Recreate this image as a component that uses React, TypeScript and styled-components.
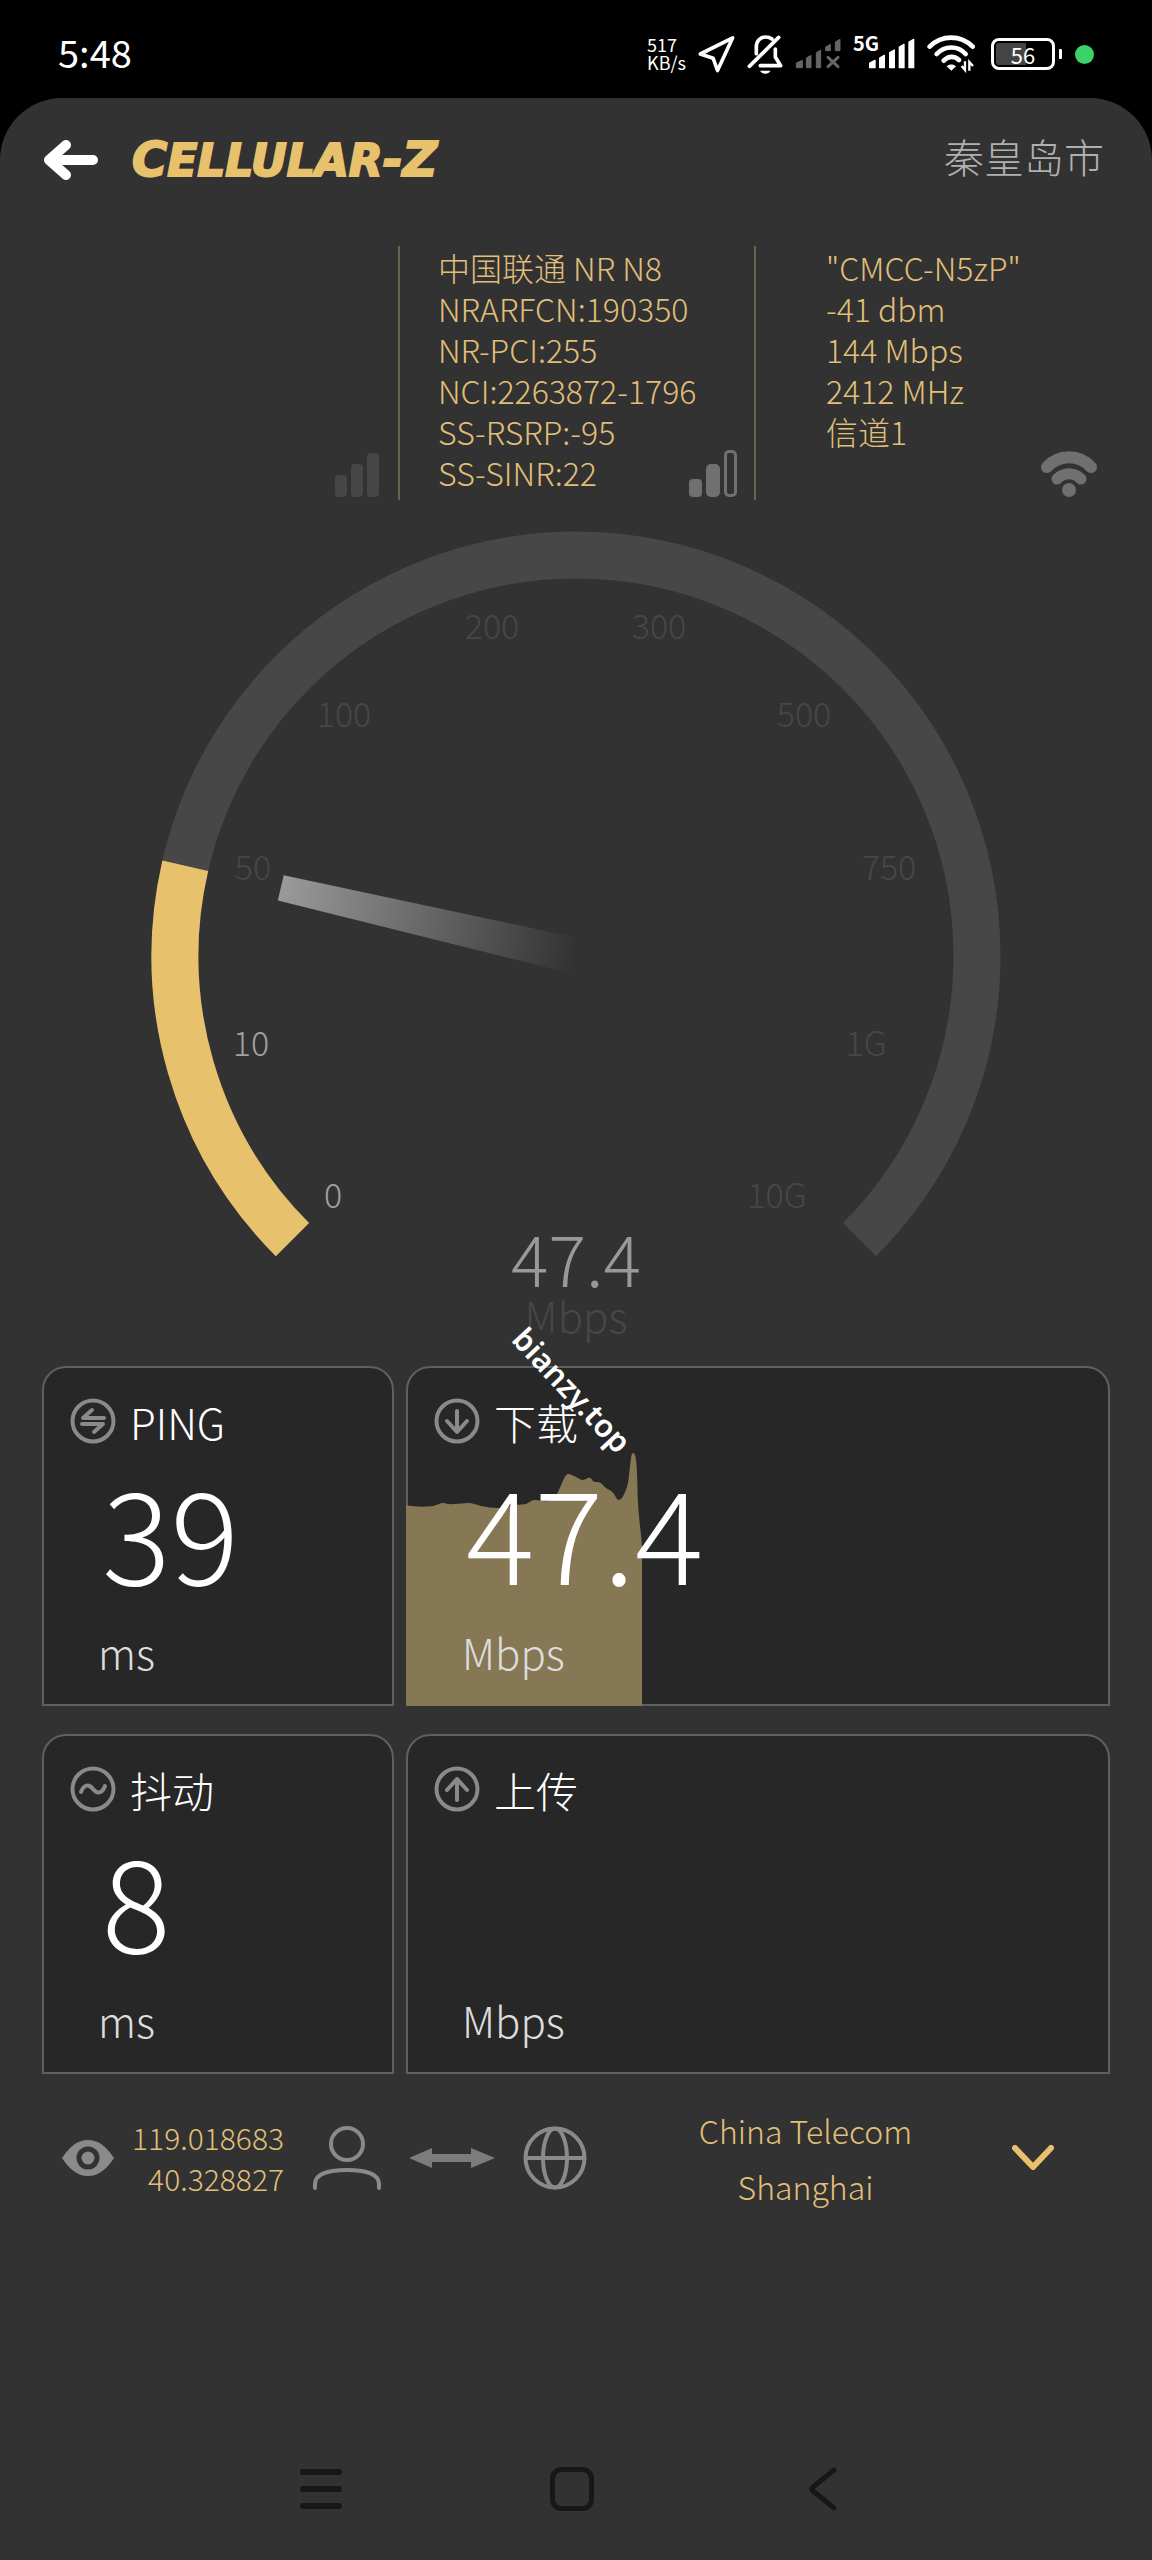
import React from 'react';
import styled, { createGlobalStyle } from 'styled-components';

const gold = '#e8c16c';
const goldText = '#e0bf78';
const grey = '#8a8a8a';

const GlobalStyle = createGlobalStyle`
  * { box-sizing: border-box; }
  body {
    margin: 0;
    background: #000;
    font-family: 'Noto Sans CJK SC', 'Noto Sans', sans-serif;
    font-weight: 300;
  }
  svg { display: block; flex: none; }
`;

const Screen = styled.div`
  display: flex;
  flex-direction: column;
  min-height: 100vh;
  background: #000;
`;

const StatusBar = styled.div`
  display: flex;
  align-items: center;
  height: 98px;
  padding: 10px 58px 0;
  color: #fff;
`;

const Clock = styled.time`
  flex: 1;
  padding-bottom: 4px;
  font-size: 38px;
  line-height: 40px;
  font-weight: 400;
`;

const StatusIcons = styled.div`
  display: flex;
  align-items: center;
  gap: 12px;
`;

const NetSpeed = styled.div`
  padding-bottom: 2px;
  font-size: 18px;
  line-height: 18px;
  font-weight: 400;
`;

const MobileSignal = styled.div`
  display: grid;
  width: 62px;
  > * { grid-area: 1 / 1; }
  > svg { justify-self: end; }
`;

const NetType = styled.span`
  font-size: 20px;
  line-height: 16px;
  font-weight: 700;
`;

const Battery = styled.div`
  position: relative;
  width: 64px;
  height: 32px;
  margin-left: 4px;
  border: 3px solid #fff;
  border-radius: 8px;
  padding: 2px;
  font-size: 22px;
  line-height: 22px;
  font-weight: 400;
  text-align: center;
  background: linear-gradient(90deg, #444 56%, #000 56%) content-box;
  &::after {
    content: '';
    position: absolute;
    right: -10px;
    top: 8px;
    width: 3px;
    height: 10px;
    border-radius: 1px;
    background: #fff;
  }
`;

const PrivacyDot = styled.span`
  width: 19px;
  height: 19px;
  margin-left: 8px;
  border-radius: 50%;
  background: #3bd267;
`;

const Panel = styled.main`
  display: flex;
  flex: 1;
  flex-direction: column;
  padding: 0 42px;
  border-radius: 62px 62px 0 0;
  background: #323232;
`;

const Header = styled.header`
  display: flex;
  align-items: center;
  height: 124px;
`;

const PlainButton = styled.button`
  display: flex;
  align-items: center;
  justify-content: center;
  padding: 0;
  border: 0;
  background: none;
  color: inherit;
  font: inherit;
  cursor: pointer;
`;

const Brand = styled.h1`
  flex: 1;
  margin: 0 0 0 32px;
  font-family: 'DejaVu Sans', sans-serif;
  font-size: 48px;
  line-height: 48px;
  font-weight: 700;
  font-style: italic;
  color: ${gold};
  -webkit-text-stroke: 2px ${gold};
`;

const SmallCaps = styled.span`
  font-size: 44px;
`;

const City = styled.span`
  padding: 0 6px 8px 0;
  font-size: 40px;
  line-height: 48px;
  color: #b0b0b0;
`;

const Networks = styled.section`
  display: grid;
  grid-template-columns: repeat(3, 1fr);
  height: 254px;
  margin-top: 24px;
`;

const Network = styled.div<{ $indent?: number; $end: number }>`
  display: grid;
  padding: 0 ${p => p.$end}px 3px ${p => p.$indent ?? 0}px;
  border-left: 2px solid transparent;
  > * { grid-area: 1 / 1; }
  > svg { place-self: end; }
  & + & { border-left-color: #6a6350; }
`;

const NetworkLines = styled.div`
  padding-top: 1px;
  font-size: 32px;
  line-height: 41px;
  white-space: nowrap;
  color: ${goldText};
`;

const Gauge = styled.svg`
  width: 100%;
  height: auto;
`;

const GaugeLabel = styled.text<{ $lit?: boolean }>`
  font-size: 34px;
  text-anchor: middle;
  fill: ${p => (p.$lit ? '#a0a0a0' : '#474747')};
`;

const GaugeValue = styled.text`
  font-size: 70px;
  text-anchor: middle;
  fill: #999;
`;

const GaugeUnit = styled.text`
  font-size: 42px;
  text-anchor: middle;
  fill: #474747;
`;

const Results = styled.section`
  position: relative;
  display: grid;
  grid-template-columns: 1fr 2fr;
  gap: 28px 12px;
`;

const Watermark = styled.span`
  position: absolute;
  left: 530px;
  top: 24px;
  z-index: 2;
  font-family: 'Noto Sans', sans-serif;
  font-size: 31px;
  line-height: 1;
  font-weight: 600;
  color: #fff;
  transform: translate(-50%, -50%) rotate(47deg);
`;

const Card = styled.article`
  position: relative;
  padding: 30px 26px 28px;
  border: 2px solid #606060;
  border-radius: 24px 24px 0 0;
  background: #272727;
`;

const CardBody = styled.div`
  position: relative;
`;

const CardTitle = styled.h2`
  display: flex;
  align-items: center;
  gap: 14px;
  height: 46px;
  margin: 0;
  font-size: 42px;
  font-weight: 300;
  color: #fff;
`;

const Value = styled.div`
  height: 128px;
  margin-top: 22px;
  padding-left: 32px;
  font-size: 128px;
  line-height: 128px;
  color: #fff;
`;

const Unit = styled.div`
  margin-top: 34px;
  padding-left: 28px;
  font-size: 42px;
  line-height: 48px;
  color: #ddd;
`;

const History = styled.svg`
  position: absolute;
  left: -2px;
  bottom: -2px;
`;

const Route = styled.section`
  display: flex;
  align-items: center;
  margin-top: 28px;
  padding: 0 56px 0 20px;
`;

const Coordinates = styled.div`
  width: 170px;
  font-size: 30px;
  line-height: 41px;
  text-align: right;
  color: ${goldText};
`;

const Hop = styled.div`
  display: flex;
  align-items: center;
  gap: 28px;
  margin-left: 29px;
`;

const Server = styled(PlainButton)`
  flex: 1;
  gap: 24px;
  margin-left: 36px;
  color: ${goldText};
`;

const ServerName = styled.span`
  flex: 1;
  font-size: 32px;
  line-height: 56px;
`;

const NavBar = styled.nav`
  display: grid;
  grid-template-columns: repeat(3, 1fr);
  height: 142px;
  margin-top: auto;
  padding: 0 162px 0 154px;
`;

const labels: [string, number, number, boolean?][] = [
  ['0', 291, 708, true],
  ['10', 209, 556, true],
  ['50', 211, 380],
  ['100', 302, 227],
  ['200', 450, 139],
  ['300', 617, 139],
  ['500', 762, 227],
  ['750', 847, 380],
  ['1G', 824, 556],
  ['10G', 735, 708],
];

const CX = 534;
const CY = 456;
const RADIUS = 401;

const point = (deg: number) => {
  const a = (deg * Math.PI) / 180;
  return `${CX + RADIUS * Math.cos(a)} ${CY + RADIUS * Math.sin(a)}`;
};
const arc = (from: number, to: number) =>
  `M${point(from)} A${RADIUS} ${RADIUS} 0 ${to - from > 180 ? 1 : 0} 1 ${point(to)}`;

const Ring = ({ children }: { children: React.ReactNode }) => (
  <svg width="46" height="46" viewBox="0 0 46 46" fill="none" stroke={grey} strokeWidth="4" strokeLinecap="round" strokeLinejoin="round" aria-hidden="true">
    <circle cx="23" cy="23" r="20.5" />
    {children}
  </svg>
);

const SpeedGauge = () => (
  <Gauge viewBox="0 0 1068 866" role="img" aria-label="47.4 Mbps">
    <defs>
      <linearGradient id="needle" x1="0" x2="1" y1="0" y2="0">
        <stop offset="0" stopColor="#9a9a9a" />
        <stop offset="1" stopColor="#323232" />
      </linearGradient>
    </defs>
    <path d={arc(135, 405)} fill="none" stroke="#474747" strokeWidth="47" />
    <path d={arc(135, 193)} fill="none" stroke={gold} strokeWidth="47" />
    <path d="M231 443 L534 438 V474 L231 469 Z" fill="url(#needle)" transform="rotate(13 534 456)" />
    {labels.map(([text, x, y, lit]) => (
      <GaugeLabel key={text} x={x} y={y} $lit={lit}>{text}</GaugeLabel>
    ))}
    <GaugeValue x={CX} y={787}>47.4</GaugeValue>
    <GaugeUnit x={CX} y={833}>Mbps</GaugeUnit>
  </Gauge>
);

const slantBar = (x: number, y: number, bottom = 143, w = 16) =>
  `M${x} ${y + 8} L${x + w} ${y} V${bottom} H${x} Z`;

export default function App() {
  return (
    <>
      <GlobalStyle />
      <Screen>
        <StatusBar>
          <Clock>5:48</Clock>
          <StatusIcons>
            <NetSpeed>517<br />KB/s</NetSpeed>
            <svg width="37" height="38" viewBox="181 45 112 114" fill="none" stroke="#fff" strokeWidth="11" strokeLinejoin="round" aria-hidden="true">
              <path d="M188 102 L286 53 L240 152 L227 115 Z" />
            </svg>
            <svg width="36" height="39" viewBox="335 42 108 117" fill="none" stroke="#fff" strokeWidth="11" strokeLinecap="round" strokeLinejoin="round" aria-hidden="true">
              <path d="M363 98 V78 C363 60 375 48 391 48 C398 48 405 50 410 54" />
              <path d="M342 136 L430 49" />
              <path d="M420 84 V108 L436 134 H375" />
              <path d="M374 149 H406 C402 155 397 158 390 158 C383 158 378 155 374 149 Z" fill="#fff" stroke="none" />
            </svg>
            <svg width="46" height="38" viewBox="471 45 138 114" fill="#666" stroke="#666" strokeWidth="3" strokeLinejoin="round" aria-hidden="true">
              <path d={slantBar(475, 121, 143, 18)} />
              <path d={slantBar(505, 106, 143, 14)} />
              <path d={slantBar(535, 90, 143, 13)} />
              <path d={slantBar(563, 73, 92, 14)} />
              <path d={slantBar(592, 58, 92, 14)} />
              <path d="M570 112 L600 140 M600 112 L570 140" strokeWidth="9" strokeLinecap="round" />
            </svg>
            <MobileSignal>
              <NetType>5G</NetType>
              <svg width="46" height="38" viewBox="689 45 138 114" fill="#fff" stroke="#fff" strokeWidth="4" strokeLinejoin="round" aria-hidden="true">
                <path d={slantBar(691, 121, 143, 16)} />
                <path d={slantBar(721, 106, 143, 14)} />
                <path d={slantBar(751, 90, 143, 14)} />
                <path d={slantBar(780, 73, 143, 14)} />
                <path d={slantBar(809, 58, 143, 14)} />
              </svg>
            </MobileSignal>
            <svg width="48" height="38" viewBox="861 45 144 114" fill="none" stroke="#fff" strokeWidth="14" strokeLinecap="round" aria-hidden="true">
              <path d="M869 80 C905 44 962 44 998 80" />
              <path d="M890 102 C914 76 954 76 977 102" />
              <path d="M911 122 C925 107 944 107 957 120" />
              <path d="M920 139 C928 132 940 132 948 139 L934 152 Z" fill="#fff" stroke="none" />
              <path d="M965 138 L975 150 V124 M999 138 L988 126 V152" strokeWidth="7" strokeLinecap="butt" />
            </svg>
            <Battery>56</Battery>
            <PrivacyDot />
          </StatusIcons>
        </StatusBar>

        <Panel>
          <Header>
            <PlainButton aria-label="返回">
              <svg width="58" height="44" viewBox="0 0 58 44" fill="none" stroke="#fff" strokeWidth="10" strokeLinecap="round" strokeLinejoin="round" aria-hidden="true">
                <path d="M24 7 L7 22 L24 37 M8 22 H51" />
              </svg>
            </PlainButton>
            <Brand>C<SmallCaps>ELLULAR</SmallCaps>-Z</Brand>
            <City>秦皇岛市</City>
          </Header>

          <Networks>
            <Network $end={19}>
              <svg width="44" height="44" viewBox="0 0 44 44" fill="#464646" aria-hidden="true">
                <rect x="0" y="22" width="12" height="22" rx="4" />
                <rect x="16" y="11" width="12" height="33" rx="4" />
                <rect x="32" y="0" width="12" height="44" rx="4" />
              </svg>
            </Network>
            <Network $indent={38} $end={17}>
              <NetworkLines>
                中国联通 NR N8<br />
                NRARFCN:190350<br />
                NR-PCI:255<br />
                NCI:2263872-1796<br />
                SS-RSRP:-95<br />
                SS-SINR:22
              </NetworkLines>
              <svg width="48" height="47" viewBox="0 0 48 47" fill="#707070" aria-hidden="true">
                <rect x="0" y="29" width="13" height="18" rx="4" />
                <rect x="17" y="14" width="14" height="33" rx="5" />
                <rect x="36.5" y="1.5" width="10" height="44" rx="3.5" fill="none" stroke="#707070" strokeWidth="3" />
              </svg>
            </Network>
            <Network $indent={70} $end={13}>
              <NetworkLines>
                "CMCC-N5zP"<br />
                -41 dbm<br />
                144 Mbps<br />
                2412 MHz<br />
                信道1
              </NetworkLines>
              <svg width="56" height="46" viewBox="0 0 56 46" fill="none" stroke="#707070" strokeLinecap="round" aria-hidden="true">
                <path d="M6 16 C18 3 38 3 50 16" strokeWidth="12" />
                <path d="M16 28 C23 21 33 21 40 28" strokeWidth="11" />
                <circle cx="28" cy="39" r="7" fill="#707070" stroke="none" />
              </svg>
            </Network>
          </Networks>

          <SpeedGauge />

          <Results>
            <Card>
              <CardTitle>
                <Ring><path d="M22 12 L13 20 H34 M12 26 H33 L24 34" /></Ring>
                PING
              </CardTitle>
              <Value>39</Value>
              <Unit>ms</Unit>
            </Card>
            <Card>
              <History width="236" height="340" viewBox="0 0 236 340" aria-hidden="true">
                <path
                  fill="#877855"
                  d="M0 139 C8 141 20 141 27 140 C32 139 34 137 37 137 C41 137 42 139 47 138 C53 138 58 137 62 137 C67 137 71 139 75 140 C81 141 86 142 92 142 C98 142 101 140 105 140 C111 138 116 139 120 138 C124 136 126 134 129 134 C134 134 138 136 142 135 C147 134 149 131 152 126 C156 118 159 108 162 108 C165 108 167 110 170 111 C173 112 174 114 177 114 C180 114 182 111 184 112 C187 113 186 116 189 116 C193 116 194 116 197 119 C200 124 205 123 208 128 C210 131 211 134 213 134 C217 133 219 126 221 121 C224 112 224 87 227 87 C231 87 231 104 232 137 C233 155 235 165 236 181 V340 H0 Z"
                />
              </History>
              <CardBody>
                <CardTitle>
                  <Ring><path d="M23 13 V34 M13 23 L23 34 L33 23" /></Ring>
                  下载
                </CardTitle>
                <Value>47.4</Value>
                <Unit>Mbps</Unit>
              </CardBody>
            </Card>
            <Card>
              <CardTitle>
                <Ring><path d="M11 26 C14 18 19 18 23 23 C27 28 32 28 35 20" /></Ring>
                抖动
              </CardTitle>
              <Value>8</Value>
              <Unit>ms</Unit>
            </Card>
            <Card>
              <CardTitle>
                <Ring><path d="M23 34 V13 M13 24 L23 13 L33 24" /></Ring>
                上传
              </CardTitle>
              <Value />
              <Unit>Mbps</Unit>
            </Card>
            <Watermark>bianzy.top</Watermark>
          </Results>

          <Route>
            <svg width="52" height="36" viewBox="0 0 52 36" aria-hidden="true">
              <path d="M0 18 C8 6 16 0 26 0 C36 0 44 6 52 18 C44 30 36 36 26 36 C16 36 8 30 0 18 Z" fill={grey} />
              <circle cx="26" cy="18" r="9" fill={grey} stroke="#323232" strokeWidth="5" />
            </svg>
            <Coordinates>119.018683<br />40.328827</Coordinates>
            <Hop>
              <svg width="68" height="64" viewBox="0 0 68 64" fill="none" stroke={grey} strokeWidth="4" strokeLinecap="round" aria-hidden="true">
                <circle cx="34" cy="18" r="16" />
                <path d="M2 62 V58 C2 48 16 44 34 44 C52 44 66 48 66 58 V62" />
              </svg>
              <svg width="86" height="20" viewBox="0 0 86 20" fill="#7c7c7c" aria-hidden="true">
                <path d="M0 10 L23 0 V6 H62 V0 L86 10 L62 20 V14 H23 V20 Z" />
              </svg>
              <svg width="64" height="64" viewBox="0 0 64 64" fill="none" stroke={grey} strokeWidth="4" aria-hidden="true">
                <circle cx="32" cy="32" r="29.5" />
                <ellipse cx="32" cy="32" rx="12" ry="29.5" />
                <path d="M3 32 H61" />
              </svg>
            </Hop>
            <Server>
              <ServerName>China Telecom<br />Shanghai</ServerName>
              <svg width="42" height="26" viewBox="0 0 42 26" fill="none" stroke={gold} strokeWidth="6" strokeLinecap="round" strokeLinejoin="round" aria-hidden="true">
                <path d="M3 3 L21 22 L39 3" />
              </svg>
            </Server>
          </Route>

          <NavBar>
            <PlainButton aria-label="最近任务">
              <svg width="44" height="42" viewBox="0 0 44 42" stroke="#171717" strokeWidth="6" strokeLinecap="round" aria-hidden="true">
                <path d="M4 4 H40 M4 21 H40 M4 38 H40" />
              </svg>
            </PlainButton>
            <PlainButton aria-label="主屏幕">
              <svg width="44" height="44" viewBox="0 0 44 44" fill="none" stroke="#171717" strokeWidth="5" aria-hidden="true">
                <rect x="2.5" y="2.5" width="39" height="39" rx="9" />
              </svg>
            </PlainButton>
            <PlainButton aria-label="后退">
              <svg width="28" height="44" viewBox="0 0 28 44" fill="none" stroke="#171717" strokeWidth="5" strokeLinecap="round" strokeLinejoin="round" aria-hidden="true">
                <path d="M25 3 L4 20 Q2 22 4 24 L25 41" />
              </svg>
            </PlainButton>
          </NavBar>
        </Panel>
      </Screen>
    </>
  );
}
